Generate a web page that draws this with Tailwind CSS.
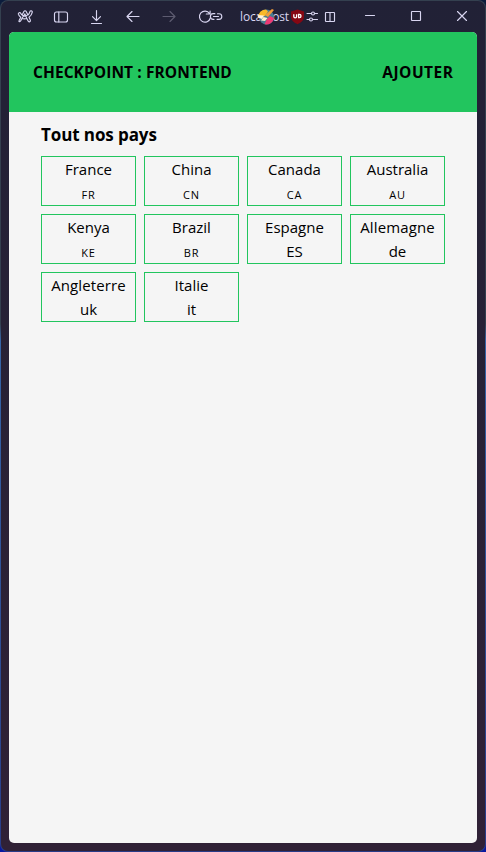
<!DOCTYPE html>
<html lang="fr">
<head>
<meta charset="utf-8">
<title>Checkpoint : frontend</title>
<script src="https://cdn.jsdelivr.net/npm/@tailwindcss/browser@4"></script>
</head>
<body class="h-[852px] w-[486px] overflow-hidden bg-linear-to-b from-[#0b1c3c] from-35% to-[#0718a0] font-['Open_Sans','Noto_Sans',sans-serif] text-black">
<div class="h-[852px] w-[486px] rounded-lg bg-linear-to-b from-[#34404f] from-38% via-[#3565a8] via-40% to-[#283c88] p-px">
<div class="flex h-full flex-col rounded-[7px] bg-linear-to-b from-[#212136] to-[#302136] px-2 pb-2">
  <div class="relative h-[31px] shrink-0 text-[#d8d5f0]">
    <svg class="absolute -left-[9px] -top-px" width="486" height="32" viewBox="0 0 486 32" fill="none" stroke="currentColor" stroke-width="1.15" stroke-linecap="round" stroke-linejoin="round">
      <path d="M18.100 20.200l1.700-3.300c-1-.8-1.900-1.800-2.400-3-.5-1.400 1.600-2.300 2.300-.9.3.7.8 1.200 1.400 1.700l1.800-3.500c.5-1 1.800-1 2.300 0l1.700 3.500c1-.8 1.700-2 2-3.300.4-1.500 2.700-1 2.400.5-.4 2.100-1.600 3.900-3.300 5.100l1.300 2.700c.7 1.500-1.500 2.500-2.200 1.100l-1.300-2.600c-1.600.5-3.300.5-4.900 0l-1 2.100c-.8 1.600-2.600 1.200-1.800-.1zM21.100 14.700c1.600 1.200 3.900 1.200 5.400-.1M20.900 18.200l3-4.600 1.900 4.600" transform="translate(1 .3)"/>
      <rect x="54.500" y="12" width="13" height="10" rx="2"/><path d="M58.800 12v10"/>
      <path d="M96.500 10.500v9.700M92.500 16.600l4 4 4-4M91.500 23.500h10M127 16.500h12M132 11.500l-5 5 5 5"/>
      <path stroke="#5d5b70" d="M163 16.500h12M170 11.500l5 5-5 5"/>
      <path d="M209.500 13.500a5.500 5.500 0 1 0 .8 4.500M206.300 14h3.800V11"/>
      <path d="M214 19.300h-.8a2.800 2.800 0 0 1 0-5.600h1.600M217.500 13.700h1.500a2.800 2.800 0 0 1 0 5.600h-2M213.500 16.500h5"/>
      <path d="M307 13.500h4.500M315 13.500h2.500M307 19.500h2.200M313 19.500h4.500"/><circle cx="313" cy="13.500" r="1.500"/><circle cx="311" cy="19.500" r="1.500"/>
      <rect x="325.500" y="12.500" width="9" height="9" rx=".5"/><path d="M330 12.500v9"/>
      <path d="M365.500 15.500h9"/><rect x="411.500" y="11.500" width="9" height="9" rx=".5"/><path d="M457.500 11.500l9 9M466.500 11.500l-9 9"/>
    </svg>
    <span class="absolute left-[231px] top-[8px] text-[12px] leading-4 tracking-[-0.15px]">localhost</span>
    <svg class="absolute left-[248px] top-[7px]" width="18" height="18" viewBox="0 0 18 18">
      <circle cx="9.500" cy="9" r="7.500" fill="#477b90"/>
      <path d="M1 9.500A8 8 0 0 1 9 1.500l2 2L8 8z" fill="#f8b928"/>
      <path d="M.500 7L7 7.500 5 11 1 9.500z" fill="#fff1dc"/>
      <path d="M17 10a7.500 7.500 0 0 1-9.500 6.300L10 11l3-3z" fill="#ed3974"/>
      <path d="M8 7l7-6 2 1-6 7z" fill="#ef9b38"/><path d="M4 12.500l2.500-3.500 4 1-2.500 3z" fill="#fff0ce"/>
    </svg>
    <svg class="absolute left-[281px] top-[8px]" width="15" height="16" viewBox="0 0 15 16">
      <path d="M7.500.5L14 2.500v5c0 4-3 6-6.500 7.800C4 13.500 1 11.500 1 7.500v-5z" fill="#850713"/>
      <path d="M3.800 5.200v2.300a1.300 1.300 0 0 0 2.800 0V5.200M8.600 5.400v3.200h.8a1.600 1.600 0 0 0 0-3.200z" fill="none" stroke="#fff" stroke-width="1.300"/>
    </svg>
  </div>
  <div class="min-h-0 flex-1 overflow-hidden rounded-[5px] bg-[#f5f5f5]">
    <header class="flex h-20 items-center justify-between bg-[#22c55e] px-6 pt-px text-[15.5px] font-bold">
      <h1 class="tracking-[0.08px]">CHECKPOINT : FRONTEND</h1>
      <a class="-mr-[0.5px] tracking-[0.5px]">AJOUTER</a>
    </header>
    <main class="px-8 pt-[9px]">
      <h2 class="text-[17px] leading-7 font-bold tracking-[-0.1px]">Tout nos pays</h2>
      <div class="mt-[7px] grid grid-cols-4 gap-2 text-center text-[15px] leading-6 *:h-[50px] *:border *:border-[#22c55e]">
        <div><p>France</p><p class="pt-[2px] text-[11px] tracking-[0.8px]">FR</p></div>
        <div><p>China</p><p class="pt-[2px] text-[11px] tracking-[0.8px]">CN</p></div>
        <div><p>Canada</p><p class="pt-[2px] text-[11px] tracking-[0.8px]">CA</p></div>
        <div><p>Australia</p><p class="pt-[2px] text-[11px] tracking-[0.8px]">AU</p></div>
        <div><p>Kenya</p><p class="pt-[2px] text-[11px] tracking-[0.8px]">KE</p></div>
        <div><p>Brazil</p><p class="pt-[2px] text-[11px] tracking-[0.8px]">BR</p></div>
        <div><p>Espagne</p><p>ES</p></div>
        <div><p class="tracking-[0.12px]">Allemagne</p><p>de</p></div>
        <div><p class="tracking-[0.12px]">Angleterre</p><p>uk</p></div>
        <div><p>Italie</p><p>it</p></div>
      </div>
    </main>
  </div>
</div>
</div>
</body>
</html>
